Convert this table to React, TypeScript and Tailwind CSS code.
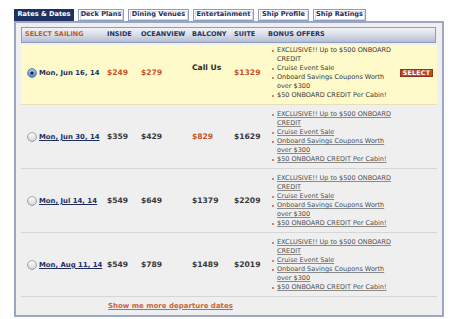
import React from "react";

type Price = { v: string; hot?: boolean; call?: boolean };
type Sailing = { date: string; prices: Price[]; selected?: boolean };

const sailings: Sailing[] = [
  {
    date: "Mon, Jun 16, 14",
    selected: true,
    prices: [{ v: "$249", hot: true }, { v: "$279", hot: true }, { v: "Call Us", call: true }, { v: "$1329", hot: true }],
  },
  { date: "Mon, Jun 30, 14", prices: [{ v: "$359" }, { v: "$429" }, { v: "$829", hot: true }, { v: "$1629" }] },
  { date: "Mon, Jul 14, 14", prices: [{ v: "$549" }, { v: "$649" }, { v: "$1379" }, { v: "$2209" }] },
  { date: "Mon, Aug 11, 14", prices: [{ v: "$549" }, { v: "$789" }, { v: "$1489" }, { v: "$2019" }] },
];

const offers: string[][] = [
  ["EXCLUSIVE!! Up to $500 ONBOARD", "CREDIT"],
  ["Cruise Event Sale"],
  ["Onboard Savings Coupons Worth", "over $300"],
  ["$50 ONBOARD CREDIT Per Cabin!"],
];

const tabs = [
  { label: "Rates & Dates", w: "w-[60px]", active: true },
  { label: "Deck Plans", w: "w-[46px]" },
  { label: "Dining Venues", w: "w-[61px]" },
  { label: "Entertainment", w: "w-[61px]" },
  { label: "Ship Profile", w: "w-[51px]" },
  { label: "Ship Ratings", w: "w-[53px]" },
];

const cols = "grid grid-cols-[86px_34px_51px_42px_34px_130px_38px]";

function Radio({ on }: { on?: boolean }) {
  return (
    <svg width="10" height="10" viewBox="0 0 10 10" className="shrink-0">
      <defs>
        <linearGradient id="rOff" x1="0" y1="0" x2="0" y2="1">
          <stop offset="0" stopColor="#ffffff" />
          <stop offset="1" stopColor="#d4d4d4" />
        </linearGradient>
        <linearGradient id="rOn" x1="0" y1="0" x2="0" y2="1">
          <stop offset="0" stopColor="#a9c9ee" />
          <stop offset="1" stopColor="#4f86cf" />
        </linearGradient>
      </defs>
      <circle cx="5" cy="5" r="4.4" fill={on ? "url(#rOn)" : "url(#rOff)"} stroke={on ? "#4d6a92" : "#8c8c8c"} strokeWidth="0.8" />
      {on && <circle cx="5" cy="5" r="1.6" fill="#1b2740" />}
    </svg>
  );
}

function Offers({ linked }: { linked: boolean }) {
  return (
    <ul className="flex flex-col">
      {offers.map((o, i) => (
        <li key={i} className="flex">
          <span className="w-[9px] shrink-0 flex justify-center pt-[3.5px]">
            <span className="w-[2px] h-[2px] rounded-full bg-[#d0602f]" />
          </span>
          <span
            className={
              linked
                ? "text-[#505050] underline decoration-[#8a8a8a] decoration-[0.6px] underline-offset-[1px]"
                : "text-[#3a3a3a]"
            }
          >
            {o.map((line, j) => (
              <React.Fragment key={j}>
                {j > 0 && <br />}
                {line}
              </React.Fragment>
            ))}
          </span>
        </li>
      ))}
    </ul>
  );
}

function Row({ s }: { s: Sailing }) {
  const base = s.selected
    ? "mt-[2px] pt-[1px] pb-[4px] bg-[#fffac9] border-b border-[#e6e0b4]"
    : "pt-[5px] pb-[4px] border-b border-[#d6d6d6]";
  return (
    <div className={`${cols} items-center ${base}`}>
      <div className="flex items-center gap-[2px] pl-[6px]">
        <Radio on={s.selected} />
        <span
          className={`text-[6.9px] font-bold text-[#1d2e63] whitespace-nowrap ${
            s.selected ? "" : "underline decoration-[0.6px] underline-offset-[1px]"
          }`}
        >
          {s.date}
        </span>
      </div>
      {s.prices.map((p, i) => (
        <div
          key={i}
          className={`text-[7.6px] font-bold whitespace-nowrap ${
            p.hot ? "text-[#c5532b]" : p.call ? "text-[#2c2c2c] mb-[10px]" : "text-[#383838]"
          }`}
        >
          {p.v}
        </div>
      ))}
      <div className="text-[6.5px] leading-[9px]">
        <Offers linked={!s.selected} />
      </div>
      <div className="pl-[2px]">
        {s.selected && (
          <span className="flex items-center justify-center w-[33px] h-[8px] bg-[#b9492a] border-[0.5px] border-[#8f3318] text-white text-[6.3px] font-bold tracking-[0.2px]">
            SELECT
          </span>
        )}
      </div>
    </div>
  );
}

export default function App() {
  return (
    <div className="w-[463px] h-[319px] bg-white font-['DejaVu_Sans','Verdana',sans-serif] overflow-hidden">
      <div className="flex items-end gap-[4px] pl-[14px] pt-[9px]">
        {tabs.map((t) =>
          t.active ? (
            <div
              key={t.label}
              className={`${t.w} h-[12px] flex items-center justify-center bg-[#1e3163] text-white text-[6.6px] font-bold whitespace-nowrap`}
            >
              {t.label}
            </div>
          ) : (
            <div key={t.label} className={`${t.w} h-[12px] border border-[#8f9cbd] bg-white p-[0.5px]`}>
              <div className="h-full flex items-center justify-center border-[0.5px] border-[#d4d9e4] text-[#1e2d5c] text-[6.6px] font-bold whitespace-nowrap">
                {t.label}
              </div>
            </div>
          )
        )}
      </div>

      <div className="ml-[14px] w-[430px] bg-[#efefef] border-2 border-[#9ba6c5] pt-[4px] pl-[5px]">
        <div
          className={`${cols} items-center h-[16px] w-[415px] border border-[#8f9bbb] bg-gradient-to-b from-[#f1f3f8] via-[#d7dce8] to-[#b4bed3] text-[6.5px] font-bold text-[#26335a]`}
        >
          <span className="pl-[3px] text-[#c0582f]">SELECT SAILING</span>
          <span className="-ml-[1px]">INSIDE</span>
          <span className="-ml-[1px]">OCEANVIEW</span>
          <span className="-ml-[1px]">BALCONY</span>
          <span className="-ml-[1px]">SUITE</span>
          <span className="-ml-[1px]">BONUS OFFERS</span>
          <span />
        </div>
        <div className="w-[416px]">
          {sailings.map((s, i) => (
            <Row key={i} s={s} />
          ))}
        </div>
        <div className="h-[18px] flex items-center pl-[87px]">
          <span className="text-[7px] font-bold text-[#c8653a] underline decoration-[0.6px] underline-offset-[1px]">
            Show me more departure dates
          </span>
        </div>
      </div>
    </div>
  );
}
